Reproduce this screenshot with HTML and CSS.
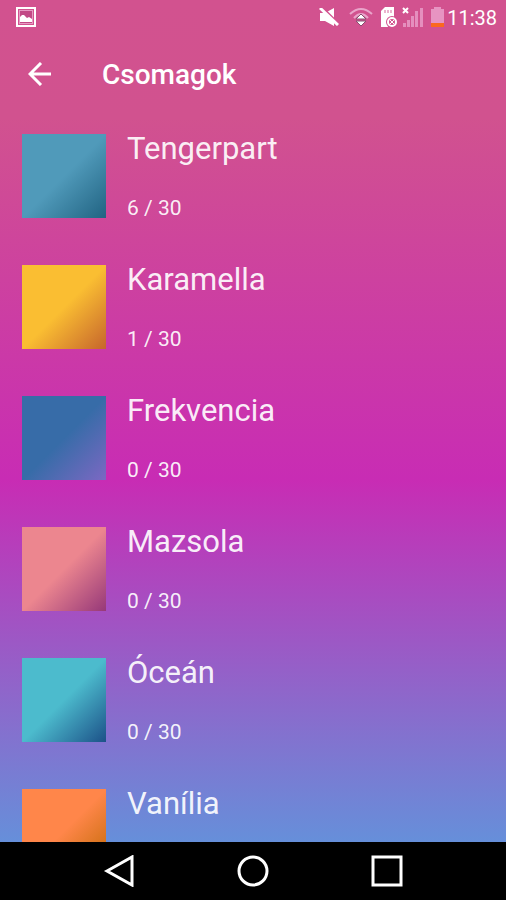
FILE: index.html
```
<!DOCTYPE html>
<html lang="hu">
<head>
<meta charset="utf-8">
<meta name="viewport" content="width=device-width, initial-scale=1">
<title>Csomagok</title>
<link rel="stylesheet" href="styles.css">
</head>
<body>
<div class="screen">
  <div class="status">
    <svg class="status-picture" width="20" height="20" viewBox="0 0 20 20" aria-hidden="true">
      <rect x="1" y="1" width="18" height="18" fill="none" stroke="#fff" stroke-width="2"/>
      <path d="M3 3h14v14H3z" fill="#e79bc4"/>
      <path d="M4 4h12v12H4z" fill="#c24a86"/>
      <path d="M4 15V10l2-2 2 0 3 3 2-1 3 2v3z" fill="#fff"/>
    </svg>
    <svg width="20" height="18" viewBox="0 0 20 18" aria-hidden="true">
      <path d="M1 5h5l9-5v18L6 13H1z" fill="#fff"/>
      <path d="M3 -1l18 18" stroke="#d2528f" stroke-width="2"/>
      <path d="M1 0l18 17" stroke="#fff" stroke-width="3"/>
    </svg>
    <svg class="status-wifi" width="24" height="20" viewBox="0 0 24 20" aria-hidden="true">
      <path d="M1 7Q12-3 23 7M5 11Q12 3 19 11" fill="none" stroke="#e9a4ca" stroke-width="2"/>
      <path d="M7 12l5-5 5 5z" fill="#fff" stroke="#875070"/>
      <path d="M7 14h10l-5 5z" fill="#fff" stroke="#875070"/>
    </svg>
    <svg class="status-card" width="18" height="21" viewBox="0 0 18 21" aria-hidden="true">
      <path d="M1 4l4-4h9v20H1z" fill="#fff"/>
      <path d="M5 3v3M8 3v3M11 3v3" stroke="#d6689d"/>
      <circle cx="12" cy="15" r="6" fill="#d2528f"/>
      <circle cx="12" cy="15" r="4" fill="none" stroke="#fff" stroke-width="2"/>
      <path d="M10 13l4 4m0-4l-4 4" stroke="#fff"/>
    </svg>
    <svg class="status-signal" width="21" height="21" viewBox="0 0 21 21" aria-hidden="true">
      <path d="M1 1l5 5m0-5L1 6" stroke="#fff" stroke-width="2"/>
      <path d="M1 16h3v4H1zM5 13h3v7H5zM9 9h3v11H9zM13 4h3v16h-3zM18 1h3v19h-3z" fill="#e58fbe"/>
    </svg>
    <svg class="status-battery" width="13" height="20" viewBox="0 0 13 20" aria-hidden="true">
      <path d="M0 2h3V0h7v2h3v18H0z" fill="#e794c2"/>
      <path d="M0 16h13v4H0z" fill="#fb681e"/>
    </svg>
    <time class="clock">11:38</time>
  </div>

  <header class="toolbar">
    <button class="back" type="button" aria-label="Vissza">
      <svg width="24" height="24" viewBox="0 0 24 24" aria-hidden="true">
        <path d="M23 12H3M13 1L2 12l11 11" fill="none" stroke="#fff" stroke-width="3"/>
      </svg>
    </button>
    <h1 class="title">Csomagok</h1>
  </header>

  <main class="list-area">
    <ul class="packs">
      <li class="pack"><span class="swatch tengerpart"></span><div class="info"><h2 class="name">Tengerpart</h2><p class="progress">6 / 30</p></div></li>
      <li class="pack"><span class="swatch karamella"></span><div class="info"><h2 class="name">Karamella</h2><p class="progress">1 / 30</p></div></li>
      <li class="pack"><span class="swatch frekvencia"></span><div class="info"><h2 class="name">Frekvencia</h2><p class="progress">0 / 30</p></div></li>
      <li class="pack"><span class="swatch mazsola"></span><div class="info"><h2 class="name">Mazsola</h2><p class="progress">0 / 30</p></div></li>
      <li class="pack"><span class="swatch ocean"></span><div class="info"><h2 class="name">Óceán</h2><p class="progress">0 / 30</p></div></li>
      <li class="pack"><span class="swatch vanilia"></span><div class="info"><h2 class="name">Vanília</h2></div></li>
    </ul>
  </main>
</div>

<nav class="navbar">
  <button class="nav-button" type="button" aria-label="Vissza">
    <svg width="32" height="32" viewBox="0 0 32 32" aria-hidden="true"><path d="M4 16L29 2v28z" fill="none" stroke="#fff" stroke-width="3"/></svg>
  </button>
  <button class="nav-button" type="button" aria-label="Kezdőképernyő">
    <svg width="32" height="32" viewBox="0 0 32 32" aria-hidden="true"><circle cx="16" cy="16" r="14" fill="none" stroke="#fff" stroke-width="3"/></svg>
  </button>
  <button class="nav-button" type="button" aria-label="Legutóbbiak">
    <svg width="32" height="32" viewBox="0 0 32 32" aria-hidden="true"><path d="M2 2h28v28H2z" fill="none" stroke="#fff" stroke-width="3"/></svg>
  </button>
</nav>
</body>
</html>
```
FILE: styles.css
```
* {
  box-sizing: border-box;
}

body {
  margin: 0;
  height: 100vh;
  display: flex;
  flex-direction: column;
  background: #000;
  color: #fff;
  font-family: Roboto, "Liberation Sans", sans-serif;
}

h1, h2, p, ul {
  margin: 0;
  padding: 0;
  font-weight: 400;
}

svg {
  display: block;
  flex: none;
}

button {
  padding: 0;
  border: 0;
  background: none;
  cursor: pointer;
}

.screen {
  flex: 1;
  min-height: 0;
  display: flex;
  flex-direction: column;
  background: linear-gradient(#d2528f 0%, #d1528f 14%, #c82cb4 57%, #668fda 100%);
}

.status {
  height: 36px;
  flex: none;
  display: flex;
  align-items: center;
  padding: 0 9px 2px 16px;
}

.status-picture {
  margin-right: auto;
}

.status-wifi {
  margin-left: 10px;
}

.status-card {
  margin-left: 7px;
}

.status-signal {
  margin-left: 4px;
}

.status-battery {
  margin-left: 8px;
}

.clock {
  margin-left: 3px;
  padding-top: 2px;
  font-size: 20px;
  line-height: 24px;
}

.toolbar {
  height: 76px;
  flex: none;
  display: flex;
  align-items: center;
  gap: 50px;
  padding-left: 28px;
}

.title {
  padding-top: 2px;
  font-size: 28px;
  line-height: 34px;
  font-weight: 500;
}

.list-area {
  flex: 1;
  min-height: 0;
  overflow: hidden;
  padding: 22px 22px 0;
}

.packs {
  display: grid;
  grid-auto-rows: 84px;
  gap: 47px;
  list-style: none;
}

.pack {
  display: flex;
  gap: 21px;
}

.swatch {
  width: 84px;
  height: 84px;
  flex: none;
}

.tengerpart { background: linear-gradient(135deg, #509aba 50%, #216382); }
.karamella { background: linear-gradient(135deg, #fabe32 50%, #c6652c); }
.frekvencia { background: linear-gradient(135deg, #376ca8 50%, #7c68c3); }
.mazsola { background: linear-gradient(135deg, #ec868f 50%, #963879); }
.ocean { background: linear-gradient(135deg, #4cbbcd 50%, #1c5188); }
.vanilia { background: linear-gradient(135deg, #ff864a 50%, #bd6800); }

.info {
  display: flex;
  flex-direction: column;
  justify-content: space-between;
  color: rgba(255, 255, 255, 0.93);
}

.name {
  font-size: 31px;
  line-height: 29px;
}

.progress {
  font-size: 21px;
  line-height: 19px;
}

.navbar {
  height: 58px;
  flex: none;
  display: grid;
  grid-template-columns: repeat(3, 134px);
  justify-content: center;
}

.nav-button {
  display: grid;
  place-items: center;
}
```
